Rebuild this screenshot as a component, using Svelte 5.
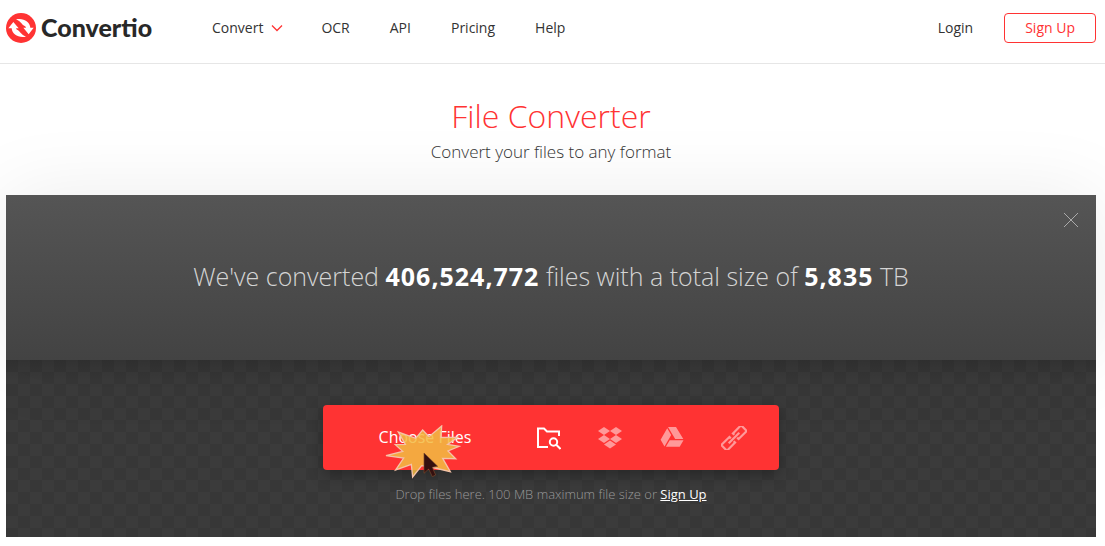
<script>
  const links = ['OCR', 'API', 'Pricing', 'Help'];
  let showStats = $state(true);
</script>

<div class="page">
  <header>
    <a class="logo" href="#home">
      <svg width="30" height="30" viewBox="0 0 90 90" aria-hidden="true">
        <circle cx="45" cy="45" r="45" fill="#ff3333" />
        <path fill="#fff" d="M30 19C52 14 72 26 73 44H83L68 64L52 44H60C59 40 56 39 52 37C48 34 42 24 30 19Z" />
        <path fill="#fff" d="M60 71C38 76 18 64 17 46H7L22 27L38 46H30C31 50 34 51 38 53C42 56 48 66 60 71Z" />
      </svg>
      <span>Convertio</span>
    </a>
    <nav aria-label="Main">
      <a class="convert" href="#convert">Convert
        <svg width="12" height="8" viewBox="0 0 12 8" fill="none" stroke="#ff3333" stroke-width="1.3" aria-hidden="true"><path d="M1 1.5 6 6.5 11 1.5" /></svg>
      </a>
      {#each links as link}
        <a href={'#' + link.toLowerCase()}>{link}</a>
      {/each}
    </nav>
    <div class="account">
      <a href="#login">Login</a>
      <a class="signup" href="#signup">Sign Up</a>
    </div>
  </header>

  <main>
    <div class="title">
      <h1>File Converter</h1>
      <p>Convert your files to any format</p>
    </div>

    {#if showStats}
      <section class="stats">
        <p>We've converted <b>406,524,772</b> files with a total size of <b>5,835</b> TB</p>
        <button class="close" aria-label="Close" onclick={() => (showStats = false)}>
          <svg width="16" height="16" viewBox="0 0 16 16" stroke="#aaa" fill="none"><path d="M1 1 15 15M15 1 1 15" /></svg>
        </button>
      </section>
    {/if}

    <section class="drop">
      <div class="picker">
        <button class="choose">Choose Files</button>
        <button class="source active" aria-label="From computer">
          <svg width="26" height="24" viewBox="0 0 26 24" fill="none" stroke="#fff" stroke-width="2">
            <path d="M13 21H3V2.500H9L12 5.500H24V10" />
            <circle cx="18.500" cy="16" r="3.700" /><path d="M21 18.500 25.500 23" />
          </svg>
        </button>
        <button class="source" aria-label="From Dropbox">
          <svg width="26" height="24" viewBox="0 0 26 24" fill="#ff9999">
            <path d="M7 1 13 5 7 9 1 5ZM19 1 25 5 19 9 13 5ZM7 9 13 13 7 17 1 13ZM19 9 25 13 19 17 13 13ZM13 14.500 19 18.500 13 22.500 7 18.500Z" />
          </svg>
        </button>
        <button class="source" aria-label="From Google Drive">
          <svg width="26" height="24" viewBox="0 0 26 24" fill="#ff9999">
            <path d="M9 1H17L24.3 13H16.2ZM8.2 2.2 12.2 8.900 5.5 20.500 1.6 13.800ZM10.7 14.2H24.5L20.7 20.800H6.9Z" />
          </svg>
        </button>
        <button class="source" aria-label="From link">
          <svg width="26" height="24" viewBox="0 0 26 24" fill="none" stroke="#ff9999" stroke-width="2.2">
            <g transform="rotate(-45 13 12)">
              <path d="M10.500 10V8H-1V16H10.500V14M15.500 10V8H27V16H15.500V14" />
              <path d="M5.500 12H20.500" />
            </g>
          </svg>
        </button>
        <svg class="click" width="76" height="54" viewBox="45 90 228 162" aria-hidden="true">
          <path d="M215 93 213 127 263 127 233 148 268 154 234 168 257 191 218 190 241 230 182 216 155 212 128 246 124 208 77 225 101 189 48 182 98 169 76 149 106 148 85 111 137 130 158 105 177 125Z" fill="#f2bc42" fill-opacity=".86" stroke="#f5c3a8" stroke-width="4" />
          <path d="M162 174 162 235 176 222 187 245 197 240 187 217 203 214Z" fill="#35100f" stroke="#78482c" stroke-width="2" />
        </svg>
      </div>
      <p class="hint">Drop files here. 100 MB maximum file size or <a href="#signup">Sign Up</a></p>
    </section>
  </main>
</div>

<style>
  :global(body) { margin: 0; background: #fff; }
  .page {
    font-family: "Open Sans", sans-serif;
    font-size: 14px;
    color: #333;
    overflow: hidden;
    padding-bottom: 9px;
  }
  a { color: inherit; text-decoration: none; }
  p, h1 { margin: 0; }
  button { border: 0; padding: 0; background: none; font: inherit; color: inherit; cursor: pointer; }
  header {
    display: flex;
    align-items: center;
    height: 56px;
    padding: 0 9px 7px 6px;
    border-bottom: 1px solid #e6e6e6;
  }
  .logo { display: flex; align-items: center; gap: 5px; width: 206px; }
  .logo span { font: 900 25px/28px Lato, sans-serif; color: #282828; padding-bottom: 2px; }
  nav, .account { display: flex; align-items: center; line-height: 18px; }
  nav { gap: 40px; }
  .convert { display: flex; align-items: center; gap: 8px; margin-right: -2px; }
  .account { gap: 31px; margin-left: auto; }
  .signup {
    box-sizing: border-box;
    padding: 0 20px;
    border: 1px solid #ff3333;
    border-radius: 4px;
    color: #ff3333;
    line-height: 28px;
  }
  main { padding: 0 9px 0 6px; }
  .title { padding: 28px 0 32px; text-align: center; }
  h1 { font-size: 32px; line-height: 48px; font-weight: 300; color: #ff3333; }
  .title p { font-size: 17px; line-height: 23px; font-weight: 300; }
  .stats {
    position: relative;
    display: flex;
    align-items: center;
    justify-content: center;
    box-sizing: border-box;
    min-height: 165px;
    padding-bottom: 4px;
    background: linear-gradient(#555, #434343);
    box-shadow: 0 0 80px rgba(0, 0, 0, .08);
    color: #d4d4d4;
    font-size: 25px;
    line-height: 34px;
    font-weight: 300;
    text-align: center;
  }
  .stats b { font-weight: 700; letter-spacing: 1px; color: #fff; }
  .close { position: absolute; top: 17px; right: 17px; width: 16px; height: 16px; }
  svg { display: block; }
  .drop {
    padding: 45px 0 32px;
    background:
      linear-gradient(rgba(0, 0, 0, .12), transparent 20px),
      repeating-conic-gradient(#3b3b3b 0 25%, #373737 0 50%) 0 0 / 24px 24px;
  }
  .picker {
    position: relative;
    display: flex;
    align-items: center;
    box-sizing: border-box;
    width: 456px;
    max-width: 100%;
    height: 65px;
    margin: 0 auto;
    padding-right: 14px;
    background: #ff3333;
    border-radius: 4px;
    box-shadow: 0 5px 15px rgba(0, 0, 0, .3);
  }
  .choose { flex: 1; height: 65px; color: #fff; font-size: 16px; padding: 0 0 2px 10px; }
  .source { display: flex; align-items: center; justify-content: center; width: 62px; height: 65px; }
  .click { position: absolute; left: 62px; top: 20px; pointer-events: none; }
  .hint { padding-top: 14px; text-align: center; color: #999; font-size: 13px; font-weight: 300; line-height: 21px; }
  .hint a { color: #fff; font-weight: 400; text-decoration: underline; }
</style>
